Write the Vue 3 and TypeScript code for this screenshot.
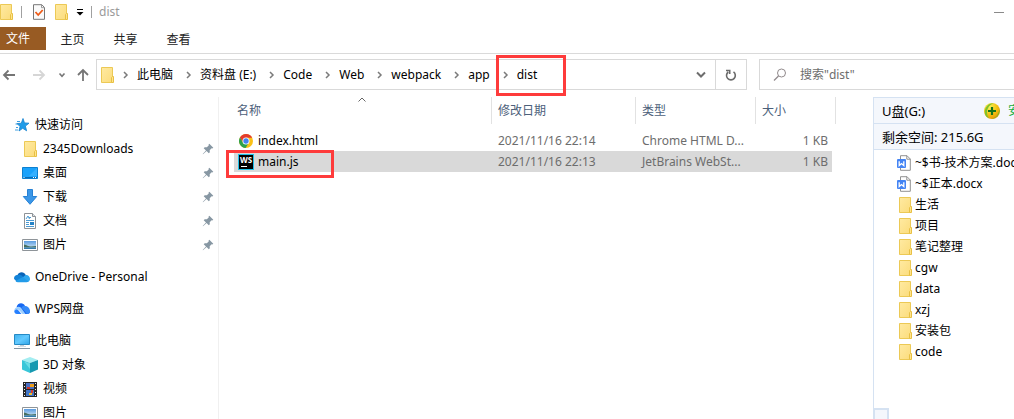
<script setup lang="ts">
interface NavItem {
  label: string
  icon: string
  root?: boolean
  gap?: boolean
  pinned?: boolean
}
interface FileRow {
  name: string
  icon: string
  date: string
  type: string
  size: string
  selected?: boolean
}

const tabs: string[] = ['主页', '共享', '查看']
const crumbs: string[] = ['此电脑', '资料盘 (E:)', 'Code', 'Web', 'webpack', 'app', 'dist']
const navItems: NavItem[] = [
  { label: '快速访问', icon: 'star', root: true },
  { label: '2345Downloads', icon: 'folder', pinned: true },
  { label: '桌面', icon: 'desktop', pinned: true },
  { label: '下载', icon: 'download', pinned: true },
  { label: '文档', icon: 'document', pinned: true },
  { label: '图片', icon: 'picture', pinned: true },
  { label: 'OneDrive - Personal', icon: 'onedrive', root: true, gap: true },
  { label: 'WPS网盘', icon: 'wps', root: true, gap: true },
  { label: '此电脑', icon: 'computer', root: true, gap: true },
  { label: '3D 对象', icon: 'cube' },
  { label: '视频', icon: 'video' },
  { label: '图片', icon: 'picture' },
]
const files: FileRow[] = [
  { name: 'index.html', icon: 'chrome', date: '2021/11/16 22:14', type: 'Chrome HTML D...', size: '1 KB' },
  { name: 'main.js', icon: 'webstorm', date: '2021/11/16 22:13', type: 'JetBrains WebSt...', size: '1 KB', selected: true },
]
const driveItems: { label: string; icon: string }[] = [
  { label: '~$书-技术方案.docx', icon: 'word' },
  { label: '~$正本.docx', icon: 'word' },
  { label: '生活', icon: 'folder' },
  { label: '项目', icon: 'folder' },
  { label: '笔记整理', icon: 'folder' },
  { label: 'cgw', icon: 'folder' },
  { label: 'data', icon: 'folder' },
  { label: 'xzj', icon: 'folder' },
  { label: '安装包', icon: 'folder' },
  { label: 'code', icon: 'folder' },
]
</script>

<template>
  <svg class="defs" width="0" height="0" aria-hidden="true">
    <defs>
      <linearGradient id="g-folder" x1="0" y1="0" x2="1" y2="1">
        <stop offset="0" stop-color="#ffeaa2" /><stop offset="1" stop-color="#fbdc7c" />
      </linearGradient>
      <linearGradient id="g-sky" x1="0" y1="0" x2="0" y2="1">
        <stop offset="0" stop-color="#5a9be0" /><stop offset="1" stop-color="#dff0f7" />
      </linearGradient>
      <linearGradient id="g-screen" x1="0" y1="0" x2="1" y2="1">
        <stop offset="0" stop-color="#3fb1ee" /><stop offset="0.5" stop-color="#63caff" /><stop offset="1" stop-color="#2ea3e6" />
      </linearGradient>
      <radialGradient id="g-ball" cx="0.35" cy="0.25" r="0.8">
        <stop offset="0" stop-color="#f6f35a" /><stop offset="0.6" stop-color="#f3c010" /><stop offset="1" stop-color="#e59408" />
      </radialGradient>
      <symbol id="i-folder" viewBox="0 0 16 16">
        <path d="M2.500.5h11v15h-11z" fill="url(#g-folder)" stroke="#ecc955" />
        <path d="M12.500 10.500l1-1h1v6h-2z" fill="#ffe48c" stroke="#e8c044" />
      </symbol>
      <symbol id="i-star" viewBox="0 0 16 16">
        <path d="M9 1.500l1.500 4.400 4.500.3-3.600 2.900 1.200 4.700-3.900-2.500-3.700 2.700 1.100-4.700-3.300-2.700 4.500-.4z" fill="#1f9be8" stroke="#1581cf" stroke-width=".8" />
        <path d="M3 4.500h3M1.500 7h2M2 10.500h2M1 13h3" stroke="#3e9fe0" />
      </symbol>
      <symbol id="i-desktop" viewBox="0 0 16 16">
        <path d="M.5 2.500h15v11H.5z" fill="#1aa2fb" stroke="#0d80d0" />
        <path d="M7 11L15 3v8z" fill="#36b0ff" />
        <path d="M1 12.500h14" stroke="#0a6cb5" />
        <path d="M1.500 12.500h1M11 12.500h1M13 12.500h1" stroke="#fff" />
      </symbol>
      <symbol id="i-download" viewBox="0 0 16 16">
        <path d="M5.500.5h5v7h4.200L8 15.300 1.300 7.500h4.200z" fill="#3b97e8" stroke="#2681d4" />
      </symbol>
      <symbol id="i-document" viewBox="0 0 16 16">
        <path d="M2.500.5h8l3 3v12h-11z" fill="#fff" stroke="#8d9297" />
        <path d="M10.500.5v3h3" fill="#dfe5ea" stroke="#8d9297" />
        <path d="M4 6l2-3 1.500 3M7 4.500h2M4 7.500h8M4 9.500h3M4 11.500h3M4 13.500h8" fill="none" stroke="#4b9ad2" />
        <path d="M8 9h4v3H8z" fill="#2583c7" />
      </symbol>
      <symbol id="i-picture" viewBox="0 0 16 16">
        <path d="M.5 2.500h15v11H.5z" fill="#fff" stroke="#8e9499" />
        <path d="M2 4h12v8H2z" fill="url(#g-sky)" />
        <path d="M2 7.500c3 .5 4 2 7 2l5-.5v1.500H2z" fill="#466e5e" />
        <path d="M2 10.500h12V12H2z" fill="#347bad" />
      </symbol>
      <symbol id="i-onedrive" viewBox="0 0 16 16">
        <path d="M3.500 6C5 2.500 10 2 12 6.500L8 11 2 7z" fill="#0a64b8" />
        <path d="M8 9l3.500-3c2.500-.5 4.500 1.500 4.500 4 0 1-.5 2-1.500 2.700z" fill="#2fa8ef" />
        <path d="M3.500 6C1 6-.2 8 .1 10l3 3L9 7.500C7.500 6 5.500 5.400 3.500 6z" fill="#1383d8" />
        <path d="M1.500 12l7.200-4 6 4.500c-.6.5-1.400.7-2.200.7H4c-1 0-1.900-.4-2.500-1.200z" fill="#229be9" />
      </symbol>
      <symbol id="i-wps" viewBox="0 0 16 16">
        <path d="M2.500 6.500C3 1.500 9.500.8 11 5l5 6c-.5 1.600-1.500 2-3 2h-2L4.500 6z" fill="#1768f2" />
        <path d="M11 5c3 0 5.500 3 5 6-.3 1-1 2-3 2L7.500 6.500C8.500 5.300 9.500 4.900 11 5z" fill="#348af9" />
        <path d="M2.500 6.500C4.500 5 6.500 6 7.500 7.500L11.500 13H8.500L5 9C3.500 8 2 8.500.5 10 0 8.500 1 7 2.500 6.500z" fill="#9ccfff" />
        <path d="M.3 10C1.500 8.500 3.500 8 4.500 9.500L7.500 13H3C1 13 .2 11.500.3 10z" fill="#2680ff" />
      </symbol>
      <symbol id="i-computer" viewBox="0 0 16 16">
        <path d="M.5 1.500h15v10H.5z" fill="url(#g-screen)" stroke="#268ac5" />
        <path d="M6 12h4v2H6z" fill="#c0cbd3" />
        <path d="M0 15.500h16" stroke="#8496a5" />
        <path d="M4 13.500h8" stroke="#d7dfe5" />
      </symbol>
      <symbol id="i-cube" viewBox="0 0 16 16">
        <path d="M0 3l8-3 8 3-8 3z" fill="#a3edf1" />
        <path d="M0 3l8 3v10l-8-3.500z" fill="#38c6d8" />
        <path d="M16 3L8 6v10l8-3.500z" fill="#1699b1" />
        <path d="M2 4.500l6 2V12z" fill="#69dce5" />
      </symbol>
      <symbol id="i-video" viewBox="0 0 16 16">
        <path d="M1 1h14v15H1z" fill="#252525" />
        <path d="M4 2h8v6H4z" fill="#4a6fc4" /><path d="M4 9h8v6H4z" fill="#3f74c6" />
        <path d="M8 3h4v3H8z" fill="#ed9e1b" /><path d="M5 6h3v2H5z" fill="#cf3427" />
        <path d="M9 9h2v3H9z" fill="#d83c2c" /><path d="M7 12h3v2H7z" fill="#eebd28" />
        <path d="M2.500 2v13M13.500 2v13" stroke="#f0f0f0" stroke-dasharray="1 2" />
      </symbol>
      <symbol id="i-chrome" viewBox="0 0 16 16">
        <circle cx="8" cy="8" r="7" fill="#fbc116" />
        <path d="M8 4.700h6.200A7 7 0 0 0 1.940 4.500L5.200 9.800z" fill="#e33b2e" />
        <path d="M1.940 4.500A7 7 0 0 0 7.600 15L10.800 9.800 8 11.300 5.100 9.700z" fill="#2da14c" />
        <circle cx="8" cy="8" r="3.500" fill="#fff" /><circle cx="8" cy="8" r="2.700" fill="#4484ef" />
      </symbol>
      <symbol id="i-word" viewBox="0 0 16 16">
        <path d="M3.500.7H10L13.300 4v11.300H3.500z" fill="#fff" stroke="#929292" />
        <path d="M9.800.7v3.500h3.500" fill="none" stroke="#929292" />
        <rect x="0" y="4" width="9" height="9" rx="1" fill="#4484f4" />
        <path d="M2.200 6.200v4.300l2.300-2 2.300 2V6.200" fill="none" stroke="#fff" stroke-width="1.300" />
      </symbol>
      <symbol id="i-pin" viewBox="0 0 12 12">
        <path d="M7.300.8l4 4-1 .7-.7-.2-1.900 2 .1 2-1 1L4.600 8 1 11.300.7 11 4 7.400 1.700 5.200l1-1 2.100.1 1.900-1.900-.1-.8z" fill="#8797a3" />
      </symbol>
      <symbol id="i-check" viewBox="0 0 16 16">
        <path d="M2.500.7h8.300l2.700 2.800v11.800h-11z" fill="#fafafa" stroke="#777" />
        <path d="M10.500.7v3h3" fill="none" stroke="#999" />
        <path d="M4.500 8l2.700 3 4.500-5" fill="none" stroke="#ee5b17" stroke-width="1.800" />
      </symbol>
      <symbol id="i-guard" viewBox="0 0 16 16">
        <circle cx="8" cy="8" r="8" fill="url(#g-ball)" />
        <path d="M1 11C0 5 4 0 10 .3 6 1.500 3 5 3 9.500c0 2 .7 4 2 5.700C3 14.500 1.600 13 1 11z" fill="#7fc22c" />
        <path d="M15.500 6c1 5-3 9.500-8 10 4-1.500 6.500-3.500 8-10z" fill="#7cba20" />
        <path d="M8 4v8M4 8h8" stroke="#14731c" stroke-width="2.200" />
      </symbol>
    </defs>
  </svg>

  <div class="window">
    <header class="titlebar">
      <svg class="icon title-folder"><use href="#i-folder" /></svg>
      <span class="bar"></span>
      <button class="plain" aria-label="属性"><svg class="icon"><use href="#i-check" /></svg></button>
      <button class="plain new-folder" aria-label="新建文件夹"><svg class="icon"><use href="#i-folder" /></svg></button>
      <button class="plain more" aria-label="自定义快速访问工具栏">
        <svg width="8" height="8" viewBox="0 0 8 8"><path d="M1 1.500h6" stroke="#000" /><path d="M.5 4h7L4 7.500z" /></svg>
      </button>
      <span class="bar"></span>
      <span class="title">dist</span>
      <button class="plain minimize" aria-label="最小化">
        <svg width="10" height="1" viewBox="0 0 10 1"><path d="M0 .5h10" stroke="#8a8a8a" /></svg>
      </button>
    </header>

    <nav class="ribbon">
      <button class="file-tab">文件</button>
      <button v-for="tab in tabs" :key="tab" class="tab">{{ tab }}</button>
    </nav>

    <div class="toolbar">
      <div class="history">
        <button class="plain" aria-label="后退"><svg width="14" height="14" viewBox="0 0 14 14"><path d="M13 7H2M6.500 2.500L2 7l4.500 4.500" fill="none" stroke="#757575" stroke-width="1.800" /></svg></button>
        <button class="plain" aria-label="前进"><svg width="14" height="14" viewBox="0 0 14 14"><path d="M1 7h11M7.500 2.500L12 7l-4.500 4.500" fill="none" stroke="#d6d6d6" stroke-width="1.800" /></svg></button>
        <button class="plain" aria-label="最近浏览的位置"><svg width="8" height="14" viewBox="0 0 8 14"><path d="M1.500 5.500L4 8.300l2.500-2.800" fill="none" stroke="#777" stroke-width="1.600" /></svg></button>
        <button class="plain" aria-label="上移"><svg width="14" height="14" viewBox="0 0 14 14"><path d="M7 13V2M2 7l5-5 5 5" fill="none" stroke="#757575" stroke-width="1.800" /></svg></button>
      </div>
      <div class="address">
        <svg class="icon"><use href="#i-folder" /></svg>
        <ol class="crumbs">
          <li v-for="(crumb, i) in crumbs" :key="crumb">
            <svg class="chevron" width="20" height="8" viewBox="0 0 20 8"><path d="M7 1l3 3-3 3" fill="none" stroke="#7b7b7b" stroke-width="1.500" /></svg>
            <a href="#">{{ crumb }}</a>
            <span v-if="i === crumbs.length - 1" class="mark mark-crumb"></span>
          </li>
        </ol>
        <button class="plain drop" aria-label="以前的位置"><svg width="10" height="8" viewBox="0 0 10 8"><path d="M1 1.500l4 4 4-4" fill="none" stroke="#6d6d6d" stroke-width="2" /></svg></button>
        <button class="plain refresh" aria-label="刷新">
          <svg width="12" height="14" viewBox="0 0 12 14"><path d="M8.500 3.900A4.400 4.400 0 1 1 3.200 4M1 2.500h3.700V6" fill="none" stroke="#6b6b6b" stroke-width="1.600" /></svg>
        </button>
      </div>
      <label class="search">
        <svg width="14" height="14" viewBox="0 0 14 14"><circle cx="8.500" cy="5" r="4" fill="none" stroke="#918a8c" /><path d="M5.500 8L1 12.500" stroke="#918a8c" stroke-width="1.200" /></svg>
        <input type="text" placeholder="搜索&quot;dist&quot;" aria-label="搜索" />
      </label>
    </div>

    <div class="body">
      <nav class="tree">
        <a v-for="(item, i) in navItems" :key="i" href="#" class="node" :class="{ root: item.root, gap: item.gap }">
          <svg class="icon"><use :href="'#i-' + item.icon" /></svg>
          <span>{{ item.label }}</span>
          <svg v-if="item.pinned" class="pin"><use href="#i-pin" /></svg>
        </a>
      </nav>

      <main class="files">
        <svg class="sort" width="8" height="5" viewBox="0 0 8 5"><path d="M.5 4.500L4 1l3.500 3.500" fill="none" stroke="#666" /></svg>
        <table>
          <colgroup><col /><col class="c-date" /><col class="c-type" /><col class="c-size" /></colgroup>
          <thead>
            <tr><th>名称</th><th>修改日期</th><th>类型</th><th>大小</th></tr>
          </thead>
          <tbody>
            <tr v-for="file in files" :key="file.name" :class="{ selected: file.selected }">
              <td class="name">
                <div class="name-cell">
                  <svg v-if="file.icon === 'chrome'" class="icon"><use href="#i-chrome" /></svg>
                  <span v-else class="ws">WS</span>
                  <span>{{ file.name }}</span>
                  <span v-if="file.selected" class="mark mark-file"></span>
                </div>
              </td>
              <td>{{ file.date }}</td>
              <td>{{ file.type }}</td>
              <td class="size">{{ file.size }}</td>
            </tr>
          </tbody>
        </table>
      </main>

      <aside class="drive">
        <div class="drive-head">
          <span>U盘(G:)</span>
          <svg class="icon guard"><use href="#i-guard" /></svg>
          <span class="safe">安</span>
        </div>
        <div class="drive-head">剩余空间: 215.6G</div>
        <ul>
          <li v-for="item in driveItems" :key="item.label">
            <svg class="icon"><use :href="'#i-' + item.icon" /></svg>
            <span>{{ item.label }}</span>
          </li>
        </ul>
        <div class="corner"></div>
      </aside>
    </div>
  </div>
</template>

<style>
body {
  background: #fff;
  overflow: hidden;
}
</style>

<style scoped>
.defs {
  position: absolute;
}
.window {
  display: flex;
  flex-direction: column;
  height: 100vh;
  min-height: 360px;
  overflow: hidden;
  font: 12px/20px "Noto Sans", "Noto Sans CJK SC", sans-serif;
  color: #000;
  white-space: nowrap;
}
.window * {
  box-sizing: border-box;
}
button,
input {
  font: inherit;
  color: inherit;
  border: 0;
  padding: 0;
  background: none;
}
a {
  color: inherit;
  text-decoration: none;
}
svg {
  display: block;
  flex: none;
}
.icon {
  width: 16px;
  height: 16px;
}
.titlebar {
  display: flex;
  align-items: center;
  height: 27px;
  padding-bottom: 3px;
  color: #9a9a9a;
}
.title-folder {
  margin-left: -2px;
}
.bar {
  width: 1px;
  height: 12px;
  margin: 0 9px 0 7px;
  background: #a0a0a0;
}
.new-folder {
  margin-left: 6px;
}
.more {
  margin-left: 7px;
}
.more + .bar {
  margin-left: 7px;
  margin-right: 7px;
}
.minimize {
  margin-left: auto;
  margin-right: 10px;
}
.ribbon {
  display: flex;
  height: 27px;
  border-bottom: 1px solid #dadada;
  color: #222;
}
.file-tab {
  width: 46px;
  height: 23px;
  padding-right: 10px;
  background: #985b23;
  color: #fff;
}
.tab {
  width: 53px;
  height: 25px;
}
.toolbar {
  display: flex;
  gap: 12px;
  height: 36px;
  padding-top: 5px;
}
.history {
  display: flex;
  align-items: center;
  width: 84px;
  padding-left: 2px;
}
.history button + button {
  margin-left: 16px;
}
.history button:nth-child(3) {
  margin-left: 12px;
}
.history button:nth-child(4) {
  margin-left: 10px;
}
.address {
  display: flex;
  align-items: center;
  flex: 1;
  border: 1px solid #d9d9d9;
  padding-left: 2px;
}
.crumbs {
  display: flex;
  flex: 1;
  gap: 7px;
  margin: 0 0 0 2px;
  padding: 0;
  list-style: none;
}
.crumbs li {
  display: flex;
  align-items: center;
  position: relative;
}
.mark {
  position: absolute;
  border: 3px solid #fe3b3b;
  pointer-events: none;
  z-index: 2;
}
.mark-crumb {
  inset: -10px -29px -11px -1px;
}
.drop {
  margin-right: 9px;
}
.refresh {
  display: grid;
  place-items: center;
  align-self: stretch;
  width: 31px;
  border-left: 1px solid #d9d9d9;
}
.search {
  display: flex;
  align-items: center;
  gap: 13px;
  width: 255px;
  border: 1px solid #d9d9d9;
  border-right: 0;
  padding-left: 13px;
}
.search input {
  flex: 1;
  min-width: 0;
  outline: 0;
}
.search input::placeholder {
  color: #6d6d6d;
  opacity: 1;
}
.body {
  display: flex;
  flex: 1;
  min-height: 0;
  padding-top: 7px;
}
.tree {
  width: 219px;
  padding-top: 16px;
  border-right: 1px solid #f0f0f0;
  overflow: hidden;
}
.node {
  display: flex;
  align-items: center;
  gap: 5px;
  height: 24px;
  padding: 0 4px 0 22px;
}
.node.root {
  padding-left: 14px;
}
.node.gap {
  margin-top: 8px;
}
.pin {
  width: 12px;
  height: 12px;
  margin-left: auto;
}
.files {
  position: relative;
  flex: 1;
  padding: 0 37px 0 15px;
}
.sort {
  position: absolute;
  top: 0;
  left: 139px;
}
table {
  width: 100%;
  table-layout: fixed;
  border-collapse: separate;
  border-spacing: 0;
}
.c-date {
  width: 144px;
}
.c-type {
  width: 120px;
}
.c-size {
  width: 80px;
}
th {
  height: 27px;
  padding: 0 0 0 6px;
  border-right: 1px solid #e2e2e2;
  font-weight: 400;
  text-align: left;
  color: #4c607a;
}
th:first-child {
  padding-left: 3px;
}
tbody::before {
  content: "";
  display: block;
  height: 6px;
}
td {
  height: 21px;
  padding: 0 0 0 6px;
  line-height: 21px;
  color: #6d6d6d;
}
.selected td {
  background-color: #d9d9d9;
  background-clip: padding-box;
}
td.name {
  padding-left: 4px;
  color: #000;
}
.name-cell {
  display: flex;
  align-items: center;
  gap: 4px;
  position: relative;
}
.mark-file {
  inset: -1px auto -6px -12px;
  width: 108px;
}
.ws {
  width: 16px;
  height: 16px;
  border: 1px solid #20c0e8;
  background: linear-gradient(#fff, #fff) 2px 11px / 6px 1px no-repeat #000;
  color: #fff;
  font-size: 8px;
  font-weight: 700;
  line-height: 10px;
  text-align: center;
}
td.size {
  padding-right: 4px;
  border-right: 4px solid transparent;
  text-align: right;
}
.drive {
  position: relative;
  width: 141px;
  border-left: 1px solid #d5e2f2;
  border-top: 1px solid #d5e2f2;
  overflow: hidden;
}
.drive-head {
  display: flex;
  align-items: center;
  height: 26px;
  padding-left: 8px;
  background: #f4f7fc;
  border-bottom: 1px solid #d5e2f2;
  font-size: 13px;
}
.guard {
  margin-left: auto;
}
.safe {
  width: 6px;
  margin-left: 8px;
  font-size: 12px;
  color: #12ad3c;
}
.drive ul {
  margin: 0;
  padding: 2px 0 0 23px;
  list-style: none;
}
.drive li {
  display: flex;
  align-items: center;
  gap: 2px;
  height: 21px;
}
.corner {
  position: absolute;
  left: -1px;
  bottom: -4px;
  width: 16px;
  height: 15px;
  border: 2px solid #d5e2f2;
  background: #f4f7fc;
}
</style>
